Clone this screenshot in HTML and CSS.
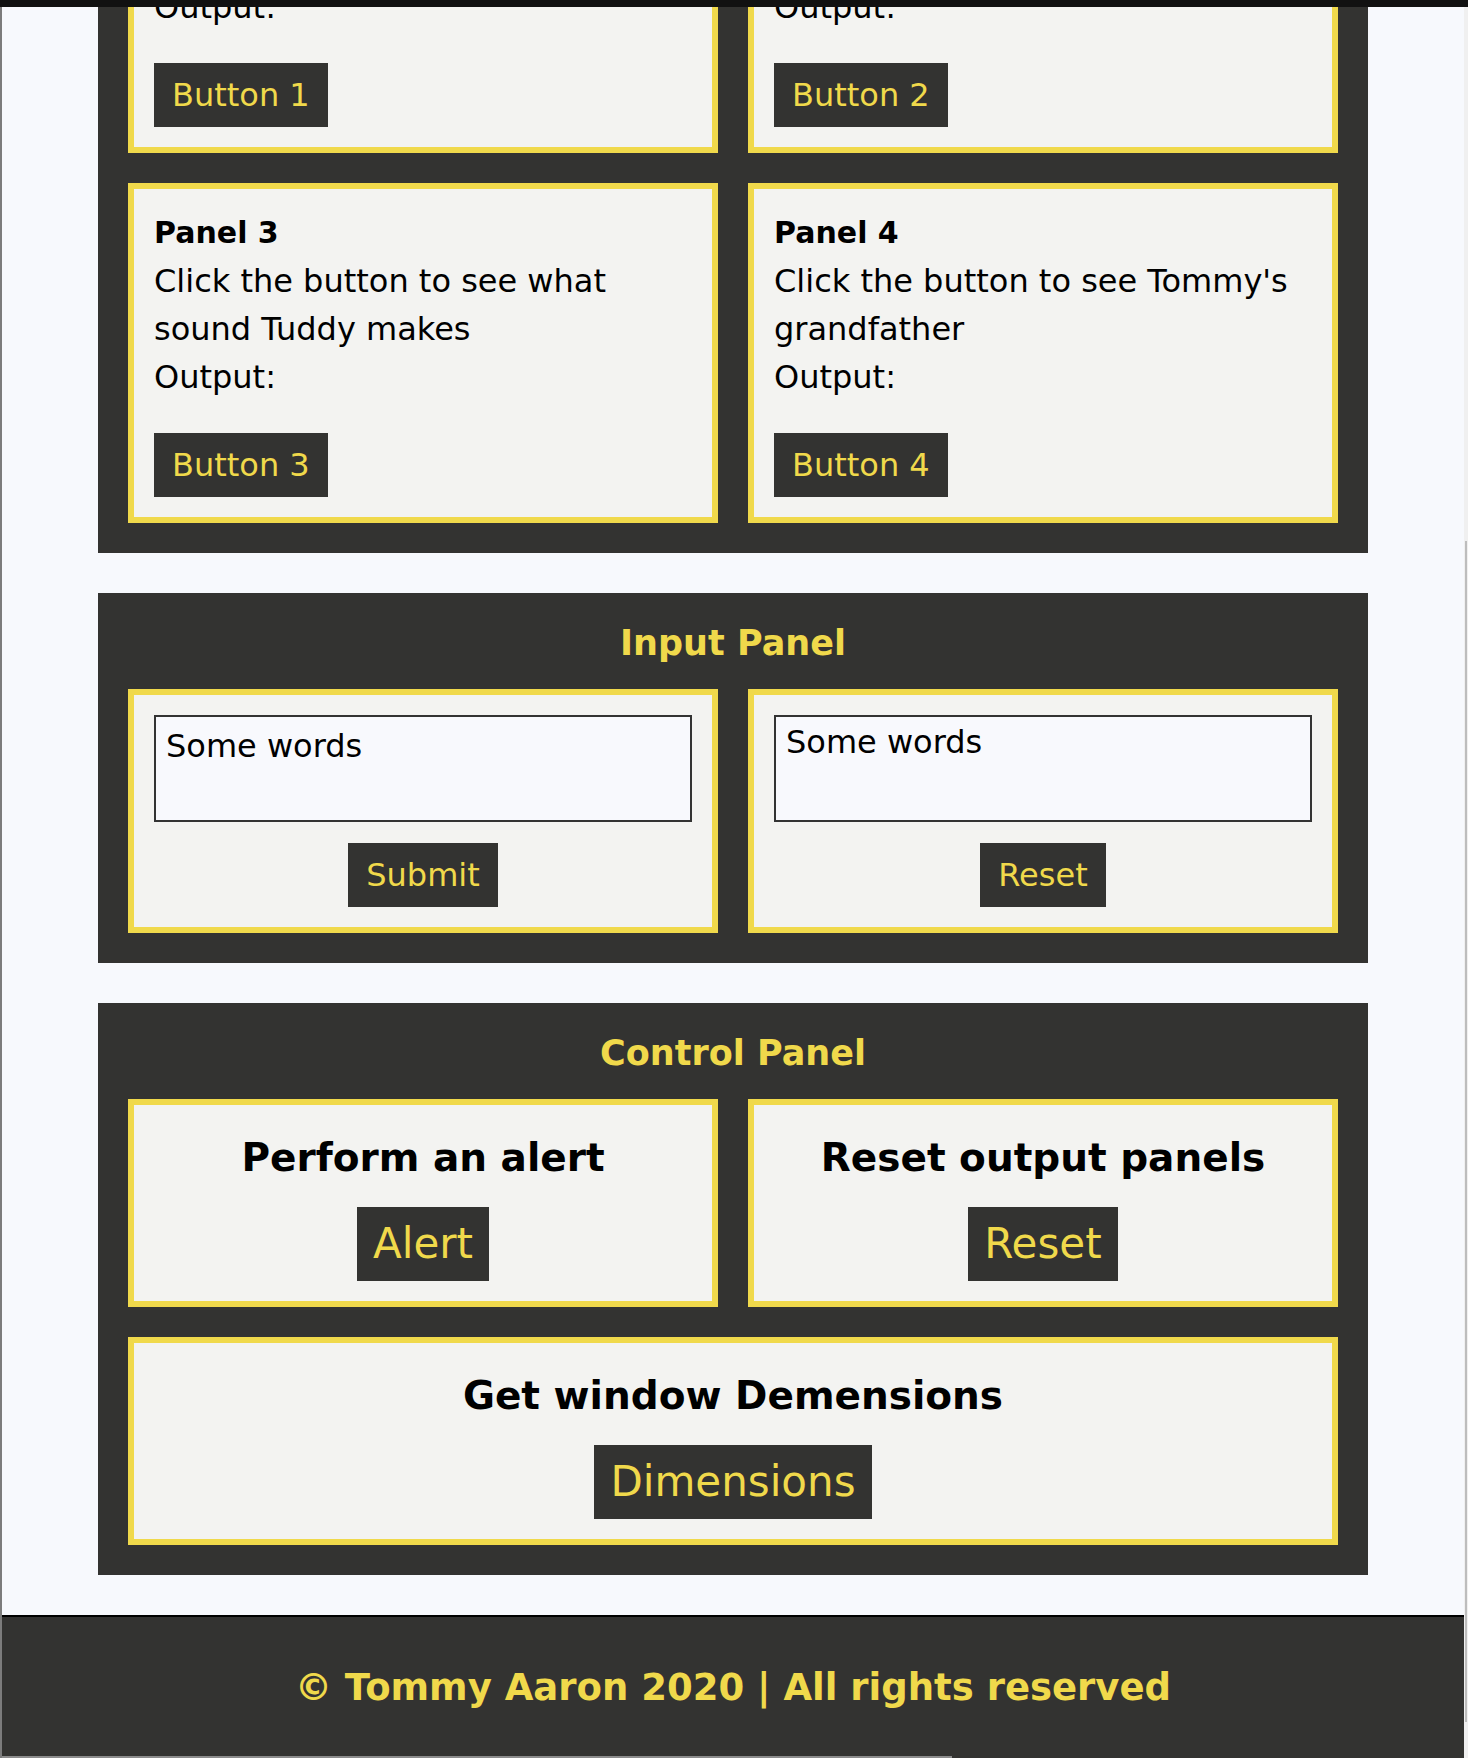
FILE: index.html
```html
<!DOCTYPE html>
<html lang="en">
<head>
  <meta charset="UTF-8">
  <title>Tommy Aaron - Panels</title>
  <link rel="stylesheet" href="styles.css">
</head>
<body>
  <div class="topbar"></div>

  <div class="page">
    <div class="scroll-clip">
      <section class="panel-section panel-section--output">
        <div class="panel-grid">
          <div class="card">
            <h3>Panel 1</h3>
            <p>Click the button to see a greeting</p>
            <p class="output">Output: <span id="output1"></span></p>
            <button class="btn">Button 1</button>
          </div>
          <div class="card">
            <h3>Panel 2</h3>
            <p>Click the button to see the date</p>
            <p class="output">Output: <span id="output2"></span></p>
            <button class="btn">Button 2</button>
          </div>
          <div class="card">
            <h3>Panel 3</h3>
            <p>Click the button to see what sound Tuddy makes</p>
            <p class="output">Output: <span id="output3"></span></p>
            <button class="btn">Button 3</button>
          </div>
          <div class="card">
            <h3>Panel 4</h3>
            <p>Click the button to see Tommy's grandfather</p>
            <p class="output">Output: <span id="output4"></span></p>
            <button class="btn">Button 4</button>
          </div>
        </div>
      </section>
    </div>

    <section class="panel-section">
      <h2 class="section-title">Input Panel</h2>
      <div class="panel-grid">
        <div class="card card--input">
          <textarea class="text-box">Some words</textarea>
          <button class="btn">Submit</button>
        </div>
        <div class="card card--input">
          <textarea class="text-box text-box--tight">Some words</textarea>
          <button class="btn">Reset</button>
        </div>
      </div>
    </section>

    <section class="panel-section">
      <h2 class="section-title">Control Panel</h2>
      <div class="panel-grid">
        <div class="card card--control">
          <h3>Perform an alert</h3>
          <button class="btn btn--large">Alert</button>
        </div>
        <div class="card card--control">
          <h3>Reset output panels</h3>
          <button class="btn btn--large">Reset</button>
        </div>
        <div class="card card--control card--wide">
          <h3>Get window Demensions</h3>
          <button class="btn btn--large">Dimensions</button>
        </div>
      </div>
    </section>

    <footer class="site-footer">
      &copy; Tommy Aaron 2020 | All rights reserved
    </footer>
  </div>

  <div class="scroll-thumb"></div>
  <div class="hscroll-thumb"></div>
</body>
</html>
```

FILE: styles.css
```css
* {
  box-sizing: border-box;
}
body {
  margin: 0;
  background-color: #f7f9fd;
  font-family: "DejaVu Sans", sans-serif;
  color: #000;
}
.topbar {
  height: 7px;
  background-color: #111;
}
.page {
  border-left: 2px solid #7c7c7c;
  border-right: 4px solid #f0f0f0;
}
.scroll-clip {
  overflow: hidden;
}
.panel-section {
  width: 1270px;
  margin: 0 auto 40px;
  padding: 30px;
  background-color: #333331;
}
.panel-section--output {
  margin-top: -176px;
}
.section-title {
  margin: 0 0 26px;
  font-size: 35px;
  line-height: 40px;
  text-align: center;
  color: #f0d94b;
}
.panel-grid {
  display: grid;
  grid-template-columns: 1fr 1fr;
  gap: 30px;
}
.card {
  background-color: #f3f3f1;
  border: 6px solid #f0d94b;
  padding: 20px;
}
.card h3 {
  margin: 0;
  font-size: 30px;
  line-height: 48px;
}
.card p {
  margin: 0;
  font-size: 32px;
  line-height: 48px;
}
.card .output {
  margin-bottom: 32px;
}
.btn {
  display: block;
  border: none;
  background-color: #333331;
  color: #f0d94b;
  font-family: inherit;
  font-size: 32px;
  line-height: 40px;
  padding: 12px 18px;
  cursor: pointer;
}
.card--input {
  display: flex;
  flex-direction: column;
  align-items: center;
  gap: 21px;
}
.text-box {
  width: 100%;
  height: 107px;
  padding: 10px;
  border: 2px solid #333;
  background-color: #f8f9fd;
  font-family: inherit;
  font-size: 32px;
  color: #000;
  resize: none;
}
.text-box--tight {
  padding-top: 6px;
}
.card--control {
  text-align: center;
}
.card--control h3 {
  font-size: 39px;
  line-height: 66px;
  margin-bottom: 16px;
}
.card--control .btn {
  margin: 0 auto;
}
.btn--large {
  font-size: 42px;
  line-height: 50px;
  padding: 12px 16px;
}
.card--wide {
  grid-column: 1 / -1;
}
.site-footer {
  border-top: 2px solid #000;
  background-color: #333331;
  color: #f0d94b;
  text-align: center;
  font-weight: bold;
  font-size: 37px;
  line-height: 56px;
  padding: 43px 0 42px;
}
.scroll-thumb {
  position: fixed;
  top: 541px;
  right: 1px;
  width: 2px;
  height: 1181px;
  background-color: #bdbdbd;
}
.hscroll-thumb {
  position: fixed;
  left: 2px;
  bottom: 0;
  width: 950px;
  height: 2px;
  background-color: #8c8c8c;
}
```
